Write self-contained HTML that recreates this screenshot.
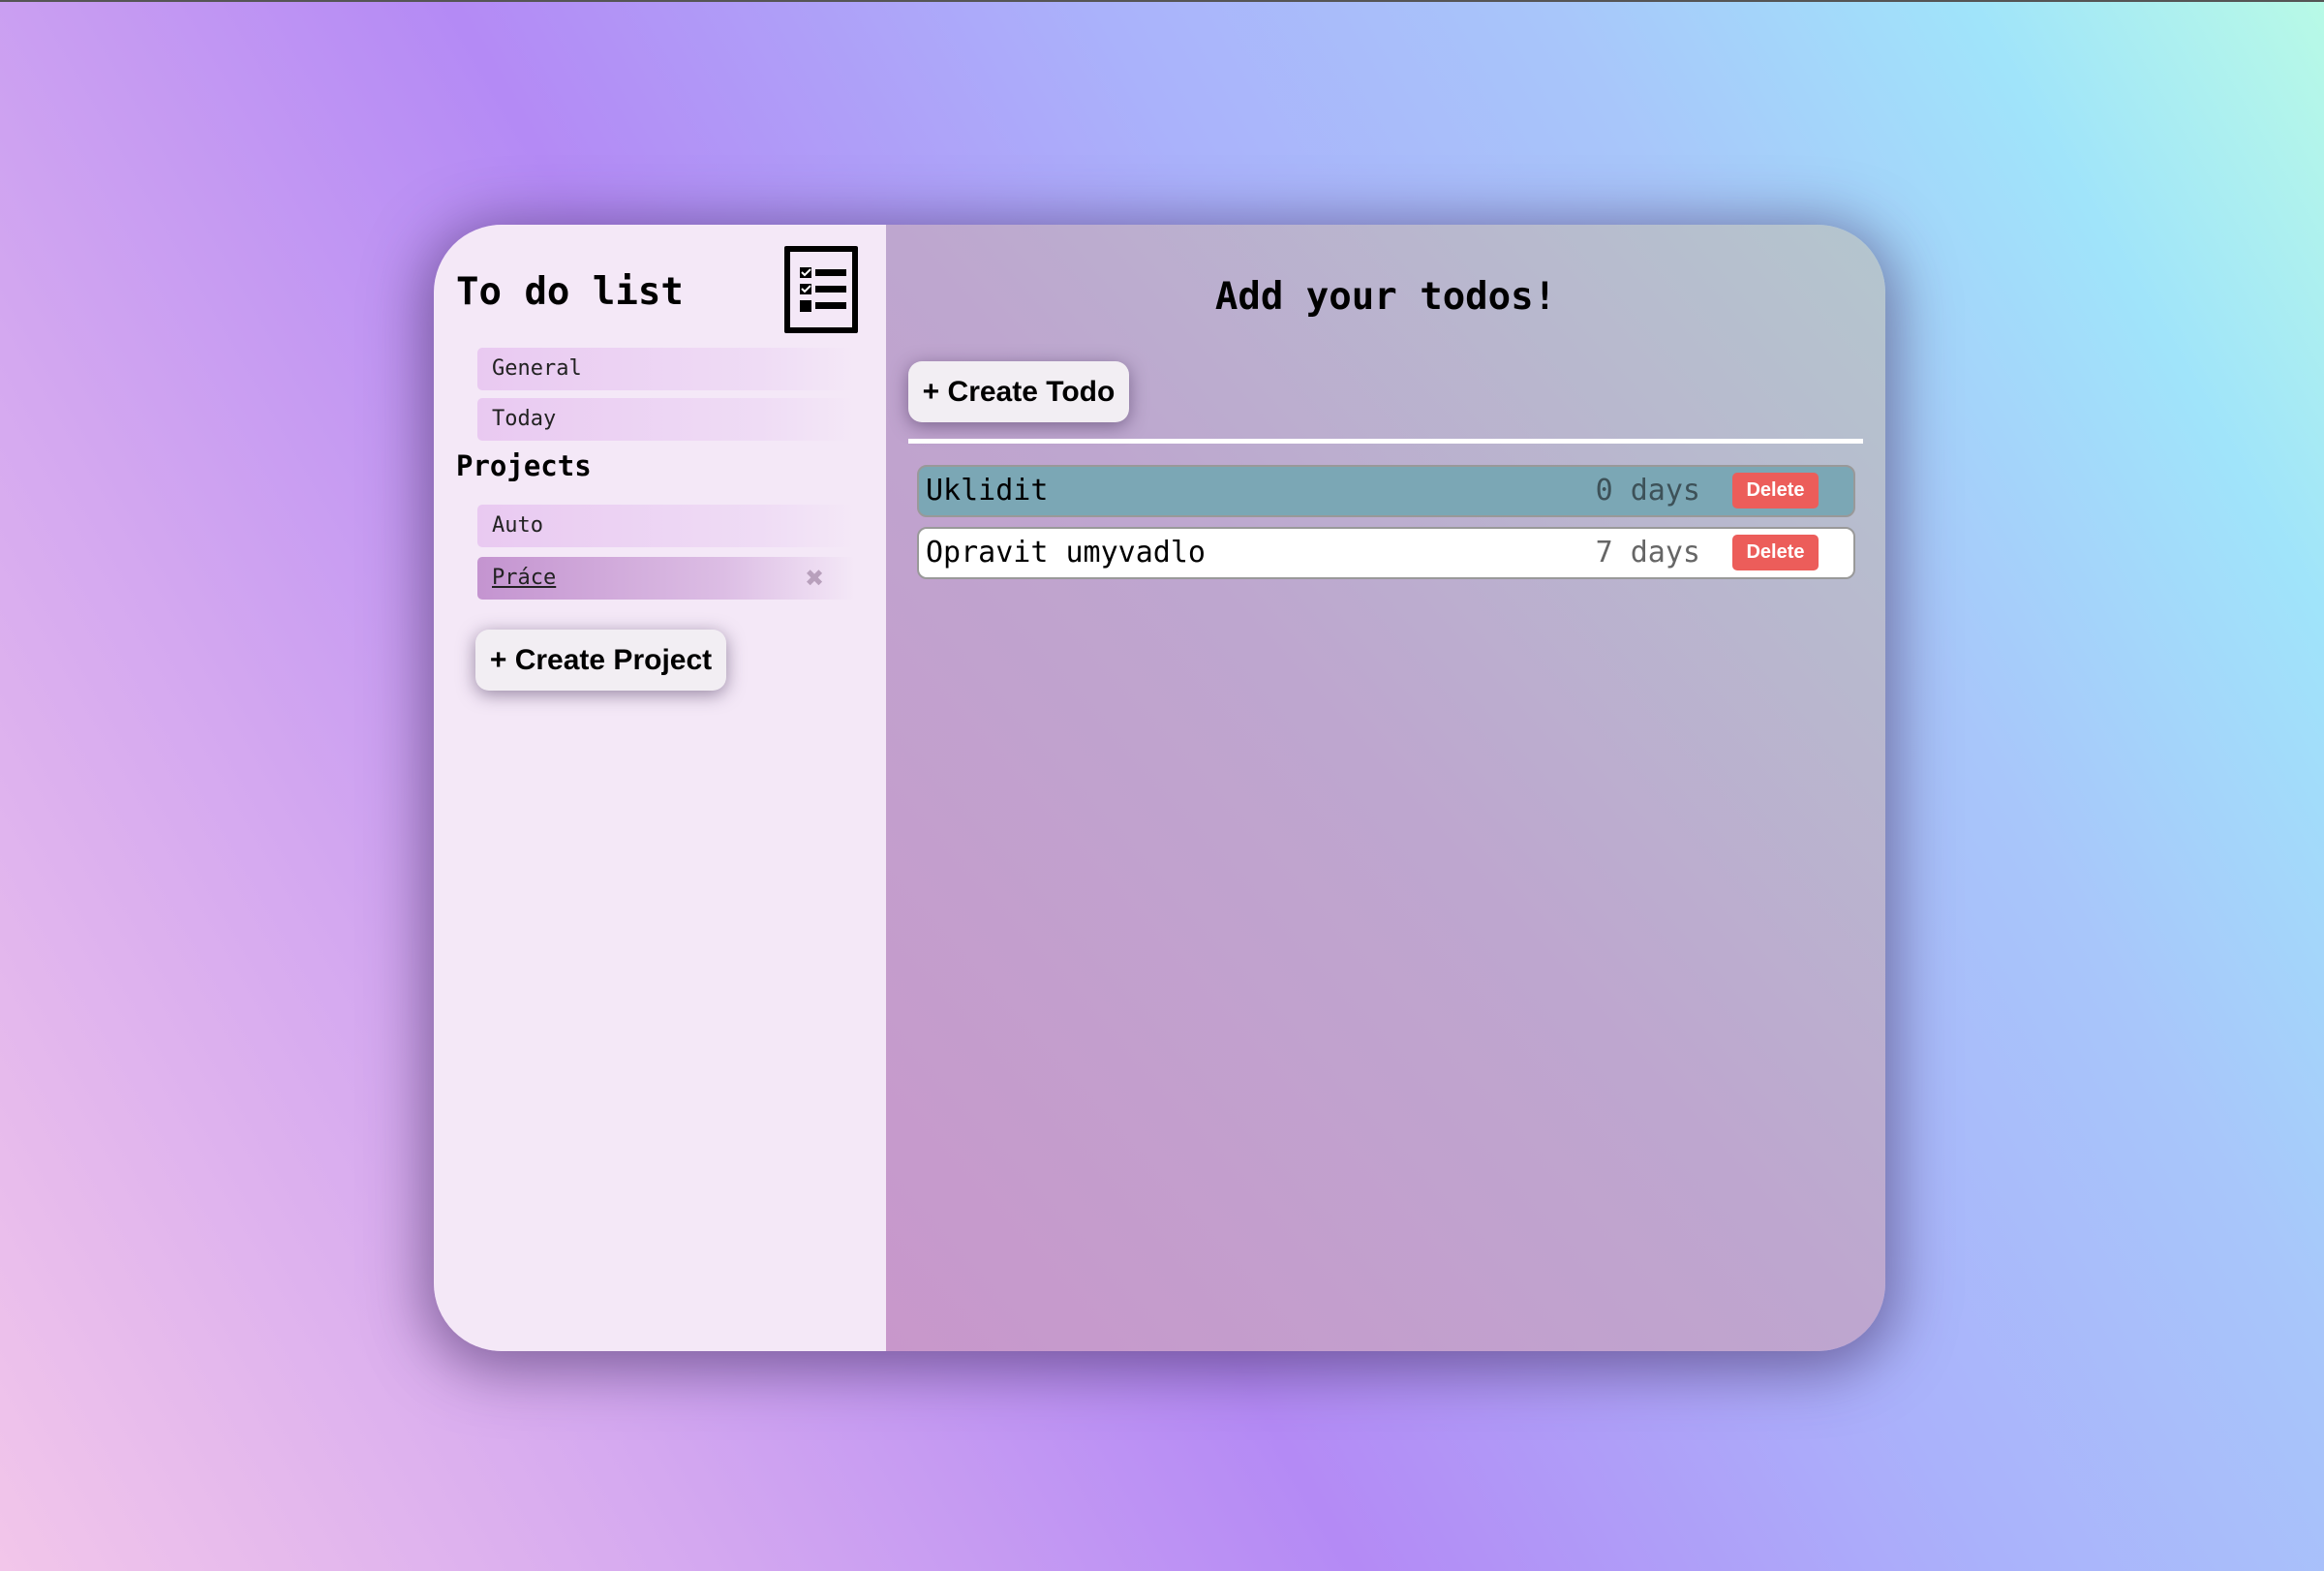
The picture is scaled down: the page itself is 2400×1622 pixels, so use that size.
<!DOCTYPE html>
<html><head><meta charset="utf-8"><style>
html,body{margin:0;padding:0}
body{width:2400px;height:1622px;overflow:hidden;position:relative;
background:linear-gradient(60deg,#f2c6ea 0%,#d4a8f0 22%,#b48af5 42%,#aab2fb 62%,#a8c6fa 76%,#a0e4fa 89%,#b8fae6 100%);
border-top:2px solid #555;box-sizing:border-box;font-family:"DejaVu Sans Mono","Liberation Mono",monospace}
.card{position:absolute;left:448px;top:230px;width:1499px;height:1163px;border-radius:70px;overflow:hidden;
box-shadow:0 10px 60px 10px rgba(60,40,90,.55);display:flex}
.side{width:467px;background:#f4e8f7;position:relative}
.main{flex:1;background:linear-gradient(to top right,#c897cb 0%,#bea6cf 50%,#b4c6ce 100%);position:relative}
h1{position:absolute;margin:0;font-size:39px;font-weight:bold;left:23px;top:47px}
.icon{position:absolute;left:362px;top:22px;width:64px;height:78px;border:6px solid #000;border-radius:2px}
.item{position:absolute;left:45px;width:390px;height:44px;border-radius:5px;
background:linear-gradient(to right,#e9c9f1,#efdcf5 75%,rgba(244,232,247,0));font-size:22px;line-height:44px;padding-left:15px;box-sizing:border-box;color:#222}
.sel{background:linear-gradient(to right,#c494d0,#dcbde4 65%,rgba(244,232,247,0))}
h2{position:absolute;margin:0;left:23px;top:232px;font-size:29px;font-weight:bold}
.btn{position:absolute;background:#f2eef3;border-radius:14px;font-family:"Liberation Sans",sans-serif;font-weight:bold;font-size:30px;
box-shadow:0 4px 18px rgba(60,40,80,.5);box-sizing:border-box;text-align:center}
.title{position:absolute;top:52px;left:0;width:100%;text-align:center;font-size:39px;font-weight:bold;margin:0}
.line{position:absolute;left:23px;top:221px;width:986px;height:5px;background:#fff}
.row{position:absolute;left:32px;width:969px;height:54px;border:2px solid #999;border-radius:10px;box-sizing:border-box;font-size:30px;line-height:50px;padding-left:7px}
.days{position:absolute;right:158px;top:0;color:#666}
.del{position:absolute;left:840px;top:6px;width:89px;height:37px;background:#ec5d5a;color:#fff;border-radius:5px;font-family:"Liberation Sans",sans-serif;font-weight:bold;font-size:20px;line-height:37px;text-align:center}
</style></head><body>
<div class="card">
 <div class="side">
  <h1>To do list</h1>
  <div class="icon"><svg width="64" height="78" viewBox="0 0 64 78">
   <rect x="10" y="16" width="12" height="11" fill="#000"/><path d="M12 21l3 3 6-6" stroke="#fff" stroke-width="2" fill="none"/>
   <rect x="26" y="18" width="32" height="7" fill="#000"/>
   <rect x="10" y="33" width="12" height="11" fill="#000"/><path d="M12 38l3 3 6-6" stroke="#fff" stroke-width="2" fill="none"/>
   <rect x="26" y="35" width="32" height="7" fill="#000"/>
   <rect x="10" y="50" width="12" height="12" fill="#000"/>
   <rect x="26" y="52" width="32" height="7" fill="#000"/></svg></div>
  <div class="item" style="top:127px">General</div>
  <div class="item" style="top:179px">Today</div>
  <h2>Projects</h2>
  <div class="item" style="top:289px">Auto</div>
  <div class="item sel" style="top:343px"><u>Práce</u><span style="position:absolute;left:338px;color:#b8a0bc;font-family:'DejaVu Sans',sans-serif;font-size:24px">✖</span></div>
  <div class="btn" style="left:43px;top:418px;width:259px;height:63px;line-height:63px">+ Create Project</div>
 </div>
 <div class="main">
  <div class="title">Add your todos!</div>
  <div class="btn" style="left:23px;top:141px;width:228px;height:63px;line-height:63px">+ Create Todo</div>
  <div class="line"></div>
  <div class="row" style="top:248px;background:#7ba7b5">Uklidit<span class="days" style="color:#3d5158">0 days</span><div class="del">Delete</div></div>
  <div class="row" style="top:312px;background:#fff">Opravit umyvadlo<span class="days">7 days</span><div class="del">Delete</div></div>
 </div>
</div>
</body></html>
